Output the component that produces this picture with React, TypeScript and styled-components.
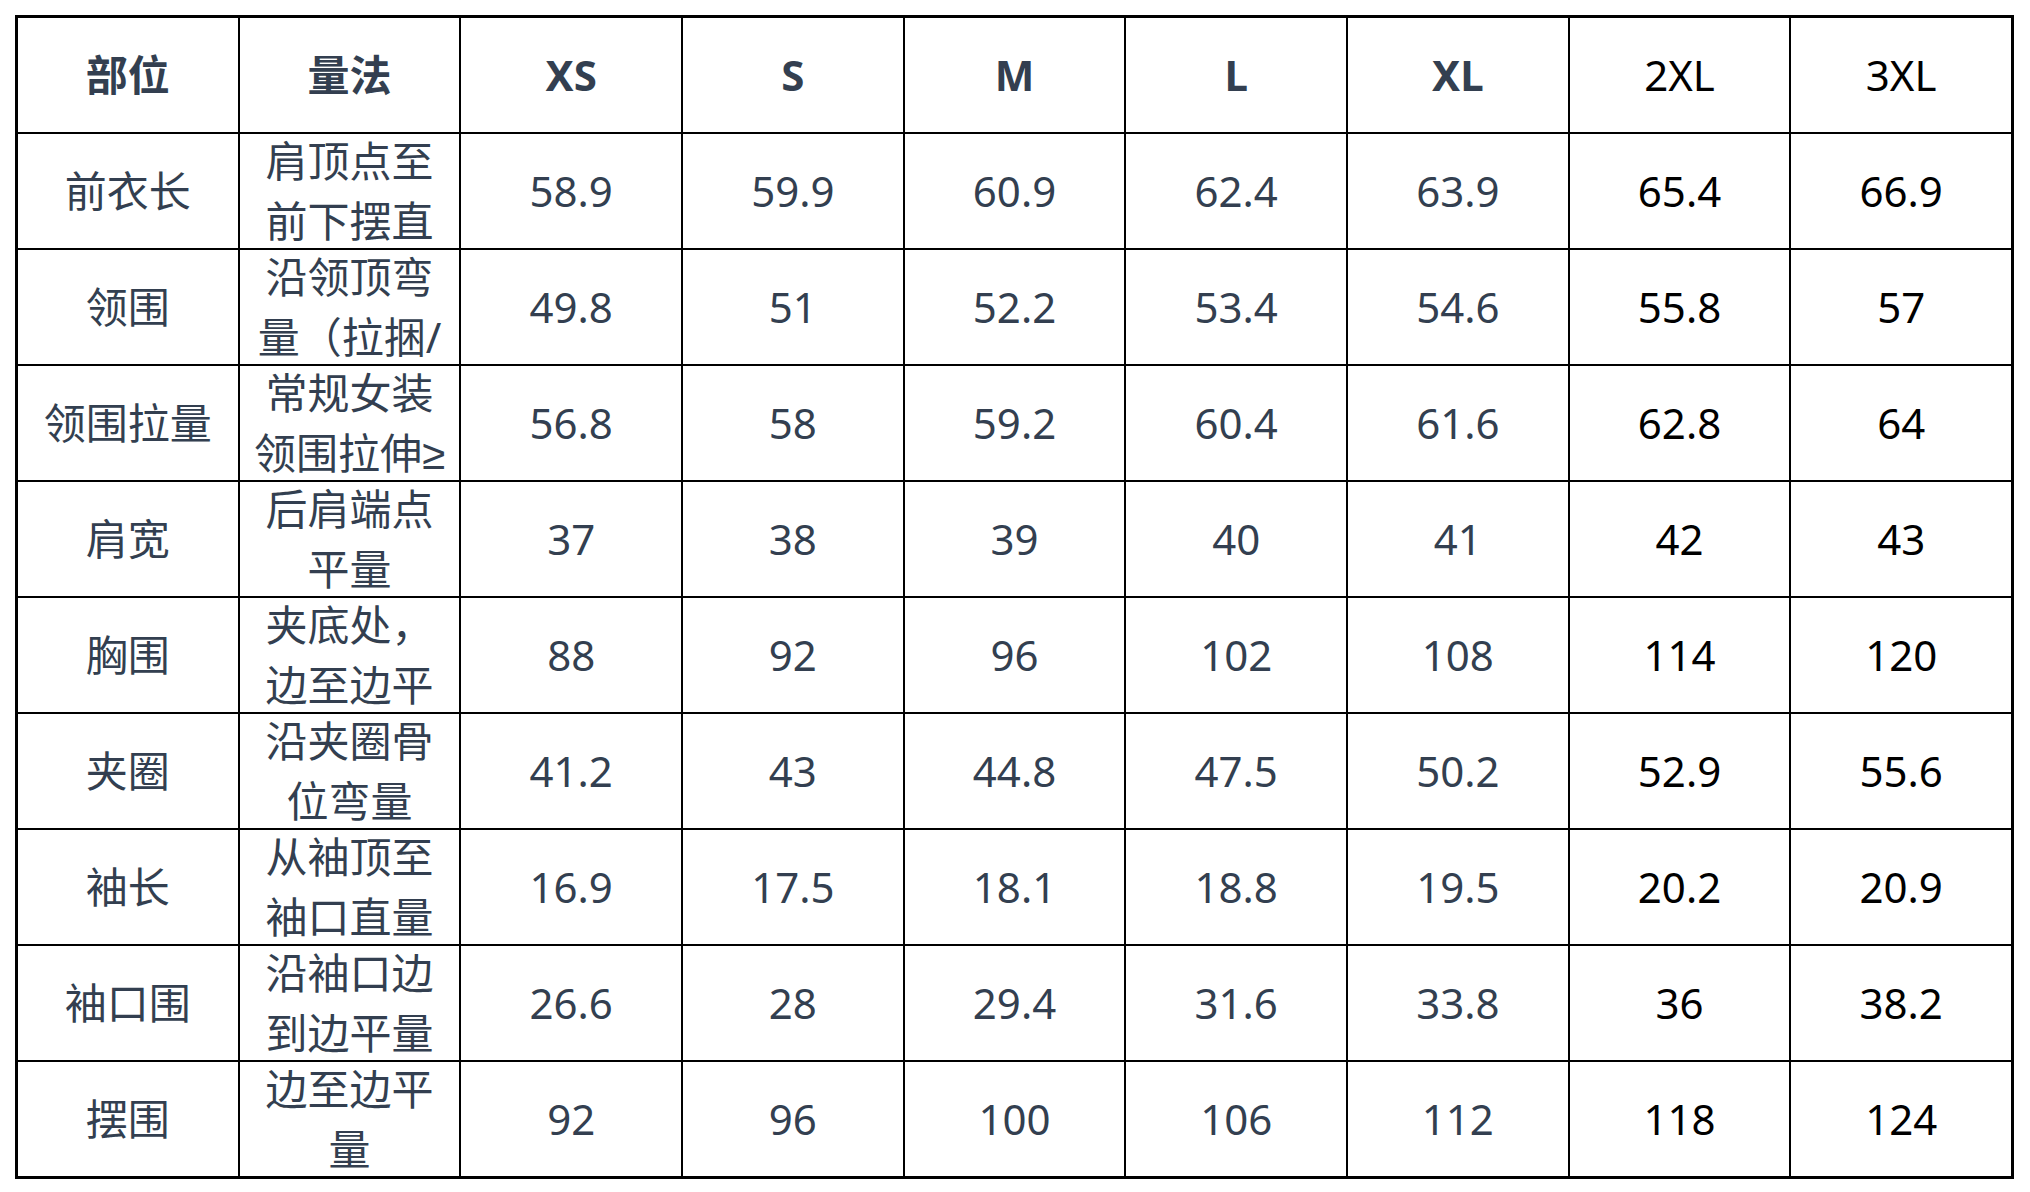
import styled, { createGlobalStyle } from 'styled-components'

const GlobalStyle = createGlobalStyle`
    body {
        margin: 0;
        background: #fff;
    }
`

const Page = styled.div`
    padding: 15px 0 0 15px;
`

const SizeGrid = styled.div`
    display: grid;
    grid-template-columns: repeat(9, 1fr);
    grid-auto-rows: 114px;
    gap: 2px;
    width: 1999px;
    box-sizing: border-box;
    padding: 3px;
    background: #000;
    font-family: "Noto Sans", "Liberation Sans", "Noto Sans CJK SC", sans-serif;
`

const Cell = styled.div<{ $bold?: boolean; $black?: boolean }>`
    background: #fff;
    display: flex;
    flex-direction: column;
    align-items: center;
    justify-content: center;
    overflow: hidden;
    text-align: center;
    font-size: 42px;
    line-height: 60px;
    font-weight: ${p => (p.$bold ? 700 : 400)};
    color: ${p => (p.$black ? '#000' : '#333f50')};
`

const Line = styled.span`
    display: block;
    white-space: nowrap;
`

const sizes = ['XS', 'S', 'M', 'L', 'XL', '2XL', '3XL']

const rows: [string, string[], string[]][] = [
    ['前衣长', ['肩顶点至', '前下摆直'], ['58.9', '59.9', '60.9', '62.4', '63.9', '65.4', '66.9']],
    ['领围', ['沿领顶弯', '量（拉捆/'], ['49.8', '51', '52.2', '53.4', '54.6', '55.8', '57']],
    ['领围拉量', ['常规女装', '领围拉伸≥'], ['56.8', '58', '59.2', '60.4', '61.6', '62.8', '64']],
    ['肩宽', ['后肩端点', '平量'], ['37', '38', '39', '40', '41', '42', '43']],
    ['胸围', ['夹底处，', '边至边平'], ['88', '92', '96', '102', '108', '114', '120']],
    ['夹圈', ['沿夹圈骨', '位弯量'], ['41.2', '43', '44.8', '47.5', '50.2', '52.9', '55.6']],
    ['袖长', ['从袖顶至', '袖口直量'], ['16.9', '17.5', '18.1', '18.8', '19.5', '20.2', '20.9']],
    ['袖口围', ['沿袖口边', '到边平量'], ['26.6', '28', '29.4', '31.6', '33.8', '36', '38.2']],
    ['摆围', ['边至边平', '量'], ['92', '96', '100', '106', '112', '118', '124']],
]

// the last two size columns are printed in plain black
const isBlack = (i: number) => i >= 5

function App() {
    return (
        <Page>
            <GlobalStyle />
            <SizeGrid>
                <Cell $bold>部位</Cell>
                <Cell $bold>量法</Cell>
                {sizes.map((s, i) => (
                    <Cell key={s} $bold={!isBlack(i)} $black={isBlack(i)}>{s}</Cell>
                ))}
                {rows.map(([part, method, values]) => [
                    <Cell key={part}>{part}</Cell>,
                    <Cell key={part + '-m'}>
                        {method.map(l => <Line key={l}>{l}</Line>)}
                    </Cell>,
                    ...values.map((v, i) => (
                        <Cell key={part + i} $black={isBlack(i)}>{v}</Cell>
                    )),
                ])}
            </SizeGrid>
        </Page>
    )
}

export default App
